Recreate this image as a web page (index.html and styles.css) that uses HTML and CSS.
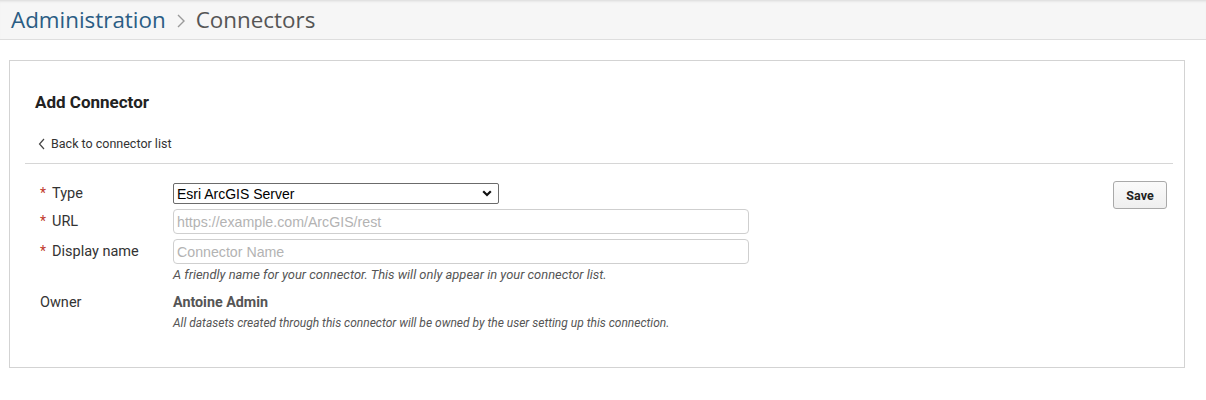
FILE: index.html
```html
<!DOCTYPE html>
<html>
<head>
<meta charset="utf-8">
<link rel="stylesheet" href="styles.css">
</head>
<body>
<header class="topbar">
  <span class="crumb-root">Administration</span>
  <svg class="crumb-sep" width="12" height="16" viewBox="0 0 12 16"><path d="M3 2 L9 8 L3 14" fill="none" stroke="#9a9a9a" stroke-width="1.4"/></svg>
  <span class="crumb-current">Connectors</span>
</header>
<main class="card">
  <h1 class="card-title">Add Connector</h1>
  <a class="back-link" href="#"><svg width="8" height="12" viewBox="0 0 8 12"><path d="M6 1 L1.5 6 L6 11" fill="none" stroke="#444" stroke-width="1.2"/></svg>Back to connector list</a>
  <hr class="divider">
  <div class="form-area">
    <div class="form-grid">
      <label class="lbl lbl-type"><span class="req">*</span>Type</label>
      <div class="field">
        <div class="select-box"><span>Esri ArcGIS Server</span><svg width="10" height="7" viewBox="0 0 10 7"><path d="M1.2 1.2 L5 5 L8.8 1.2" fill="none" stroke="#111" stroke-width="2.2"/></svg></div>
      </div>
      <label class="lbl lbl-url"><span class="req">*</span>URL</label>
      <div class="field"><input class="text-input" placeholder="https://example.com/ArcGIS/rest"></div>
      <label class="lbl lbl-name"><span class="req">*</span>Display name</label>
      <div class="field">
        <input class="text-input" placeholder="Connector Name">
        <p class="help help-name">A friendly name for your connector. This will only appear in your connector list.</p>
      </div>
      <label class="lbl lbl-owner">Owner</label>
      <div class="field owner-field">
        <div class="owner-name">Antoine Admin</div>
        <p class="help">All datasets created through this connector will be owned by the user setting up this connection.</p>
      </div>
    </div>
    <button class="save-btn">Save</button>
  </div>
</main>
</body>
</html>
```

FILE: styles.css
```css
html, body {
  margin: 0;
  padding: 0;
  background: #fff;
  font-family: Roboto, "Liberation Sans", sans-serif;
  color: #333;
}
.topbar {
  height: 39px;
  background: #f6f6f6;
  border-bottom: 1px solid #dedede;
  box-shadow: inset 0 3px 3px -2px rgba(0,0,0,0.12);
  display: flex;
  align-items: center;
  padding-left: 11px;
  font-family: "Open Sans", sans-serif;
  font-size: 22.4px;
}
.crumb-root {
  color: #2b5d84;
}
.crumb-sep {
  margin: 2px 9px 0 9px;
}
.crumb-current {
  color: #555;
}
.card {
  display: block;
  margin: 20px 21px 0 9px;
  border: 1px solid #d3d3d3;
  height: 306px;
  padding: 0 11px 0 15px;
}
.card-title {
  margin: 30px 0 0 10px;
  font-size: 17px;
  font-weight: 700;
  color: #222;
  line-height: 22px;
}
.back-link {
  display: flex;
  align-items: center;
  margin: 24px 0 0 13px;
  font-size: 12.5px;
  color: #333;
  text-decoration: none;
  line-height: 14px;
}
.back-link svg {
  margin-right: 5px;
}
.divider {
  border: 0;
  border-top: 1px solid #d6d6d6;
  margin: 12px 0 0 0;
}
.form-area {
  display: flex;
  justify-content: space-between;
  align-items: flex-start;
  padding: 19px 6px 0 15px;
}
.form-grid {
  display: grid;
  grid-template-columns: 133px 576px;
  row-gap: 5px;
}
.lbl {
  font-size: 14.5px;
  color: #333;
  line-height: 21px;
}
.req {
  color: #c0392b;
  margin-right: 6px;
  font-size: 14px;
}
.lbl-url, .lbl-name {
  line-height: 24px;
}
.lbl-owner {
  margin-top: 5px;
}
.field {
  display: flex;
  flex-direction: column;
}
.select-box {
  width: 326px;
  height: 21px;
  box-sizing: border-box;
  border: 1px solid #6b6b6b;
  border-radius: 2px;
  display: flex;
  align-items: center;
  justify-content: space-between;
  padding: 0 6px 0 3px;
  font-family: "Liberation Sans", Arial, sans-serif;
  font-size: 14px;
  color: #000;
}
.text-input {
  width: 576px;
  height: 25px;
  box-sizing: border-box;
  border: 1px solid #cfcfcf;
  border-radius: 4px;
  padding: 0 3px;
  font-family: "Liberation Sans", Arial, sans-serif;
  font-size: 14.2px;
  outline: none;
}
.text-input::placeholder {
  color: #b3b3b3;
}
.help {
  margin: 4px 0 0 0;
  font-size: 12px;
  font-style: italic;
  color: #555;
  line-height: 14px;
}
.help-name {
  font-size: 12.9px;
}
.owner-field {
  margin-top: 5px;
}
.owner-name {
  font-size: 14.3px;
  font-weight: 700;
  color: #555;
  line-height: 21px;
}
.owner-field .help {
  margin-top: 3px;
}
.save-btn {
  width: 54px;
  height: 28px;
  margin-top: -2px;
  border: 1px solid #a9a9a9;
  border-radius: 3px;
  background: linear-gradient(#fafafa, #efefef);
  font-family: Roboto, sans-serif;
  font-weight: 700;
  font-size: 12.5px;
  color: #222;
}
```
